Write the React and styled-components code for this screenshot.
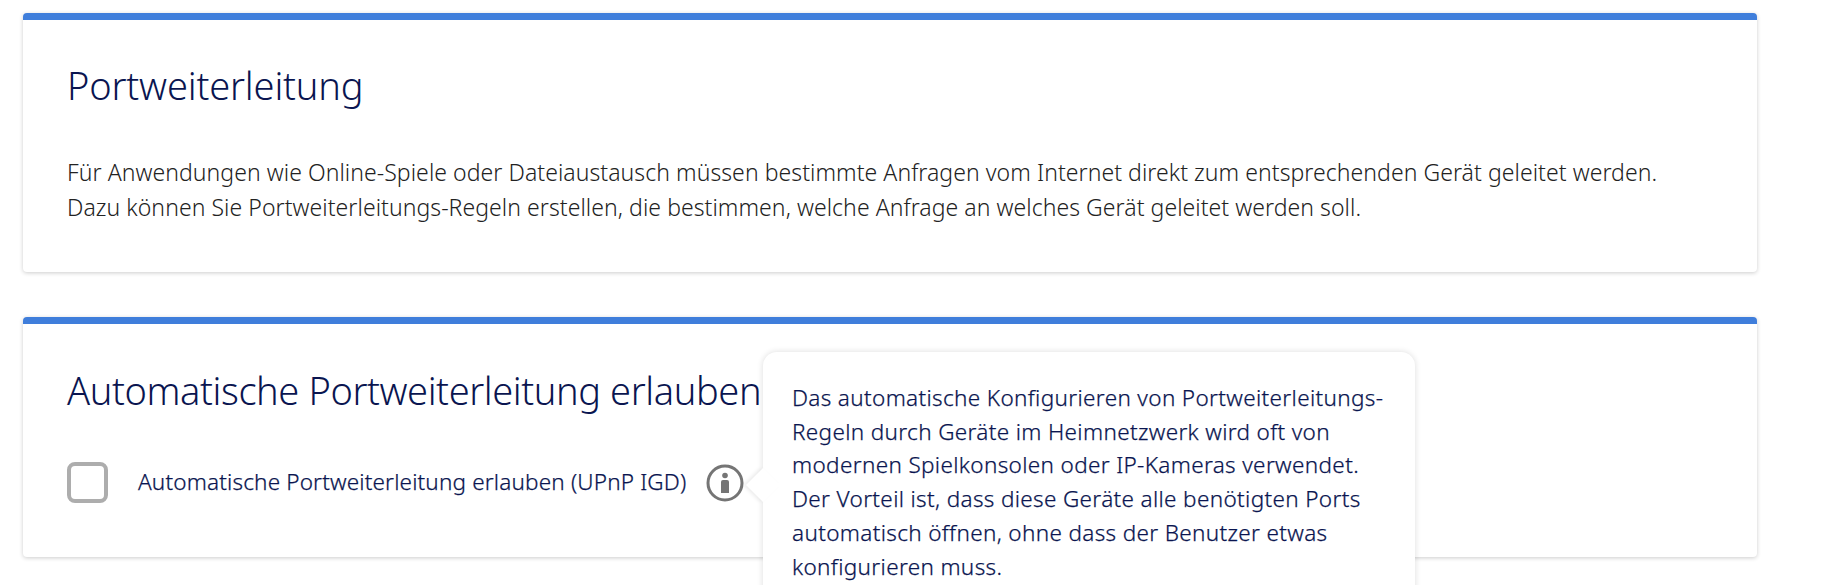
import React from "react";
import styled, { createGlobalStyle } from "styled-components";

const GlobalStyle = createGlobalStyle`
  html, body {
    margin: 0;
    height: 585px;
    overflow: hidden;
    background: #fff;
  }
  body {
    font-family: "Noto Sans", "Open Sans", sans-serif;
  }
`;

const Page = styled.div`
  width: 1734px;
  padding: 13px 0 0 23px;
  display: flex;
  flex-direction: column;
  gap: 45px;
`;

const Card = styled.section`
  position: relative;
  height: ${(p) => p.$height}px;
  box-sizing: border-box;
  padding: 0 44px;
  background: #fff;
  border-top: 7px solid #3f7edb;
  border-radius: 4px;
  box-shadow: 0 1px 4px rgba(0, 0, 0, 0.2);
`;

const Title = styled.h2`
  margin: 0;
  padding-top: ${(p) => p.$top}px;
  font-size: ${(p) => p.$size}px;
  line-height: 52px;
  font-weight: 300;
  letter-spacing: ${(p) => p.$spacing}px;
  color: #0a1550;
  white-space: nowrap;
`;

const Intro = styled.p`
  margin: 44px 0 0;
  font-size: 23px;
  line-height: 35px;
  font-weight: 300;
  letter-spacing: 0.06px;
  color: #222;
  white-space: nowrap;
`;

const OptionRow = styled.div`
  display: flex;
  align-items: center;
  margin-top: 46px;
`;

const CheckBox = styled.span`
  width: 33px;
  height: 33px;
  border: 4px solid #adadad;
  border-radius: 8px;
  flex: none;
`;

const OptionLabel = styled.label`
  margin-left: 30px;
  padding-bottom: 3px;
  font-size: 22.5px;
  font-weight: 300;
  letter-spacing: 0.17px;
  color: #0a1550;
  -webkit-text-stroke: 0.25px #0a1550;
  white-space: nowrap;
`;

const InfoButton = styled.button`
  display: flex;
  margin: 0 0 0 20px;
  padding: 0;
  border: 0;
  background: none;
`;

const Popover = styled.aside`
  position: absolute;
  left: 740px;
  top: 28px;
  width: 652px;
  height: 300px;
  box-sizing: border-box;
  padding: 29px 29px 0;
  background: #fff;
  border-radius: 14px;
  box-shadow: 0 0 6px rgba(0, 0, 0, 0.14);
  font-size: 22.5px;
  font-weight: 300;
  line-height: 33.7px;
  letter-spacing: 0.35px;
  color: #0a1550;
  -webkit-text-stroke: 0.25px #0a1550;

  &::before {
    content: "";
    position: absolute;
    left: -12px;
    top: 121px;
    width: 24px;
    height: 24px;
    background: #fff;
    transform: rotate(45deg);
    box-shadow: -2px 2px 4px rgba(0, 0, 0, 0.08);
  }
`;

const PopoverText = styled.p`
  position: relative;
  margin: 0;
  white-space: nowrap;
`;

const InfoIcon = () => (
  <svg width="38" height="38" viewBox="0 0 38 38" aria-hidden="true">
    <circle cx="19" cy="19" r="17" fill="none" stroke="#757575" strokeWidth="3" />
    <circle cx="19" cy="11.5" r="2.8" fill="#757575" />
    <path d="M17 16h4a2 2 0 0 1 2 2v11h-8V18a2 2 0 0 1 2-2z" fill="#757575" />
  </svg>
);

const App = () => (
  <>
    <GlobalStyle />
    <Page>
      <Card $height={259}>
        <Title $top={39} $size={38} $spacing={-0.15}>
          Portweiterleitung
        </Title>
        <Intro>
          Für Anwendungen wie Online-Spiele oder Dateiaustausch müssen bestimmte Anfragen vom Internet direkt zum entsprechenden Gerät geleitet werden.
          <br />
          Dazu können Sie Portweiterleitungs-Regeln erstellen, die bestimmen, welche Anfrage an welches Gerät geleitet werden soll.
        </Intro>
      </Card>
      <Card $height={240}>
        <Title $top={40} $size={38} $spacing={-0.4}>
          Automatische Portweiterleitung erlauben
        </Title>
        <OptionRow>
          <CheckBox />
          <OptionLabel>Automatische Portweiterleitung erlauben (UPnP IGD)</OptionLabel>
          <InfoButton>
            <InfoIcon />
          </InfoButton>
        </OptionRow>
        <Popover>
          <PopoverText>
            Das automatische Konfigurieren von Portweiterleitungs-
            <br />
            Regeln durch Geräte im Heimnetzwerk wird oft von
            <br />
            modernen Spielkonsolen oder IP-Kameras verwendet.
            <br />
            Der Vorteil ist, dass diese Geräte alle benötigten Ports
            <br />
            automatisch öffnen, ohne dass der Benutzer etwas
            <br />
            konfigurieren muss.
          </PopoverText>
        </Popover>
      </Card>
    </Page>
  </>
);

export default App;
